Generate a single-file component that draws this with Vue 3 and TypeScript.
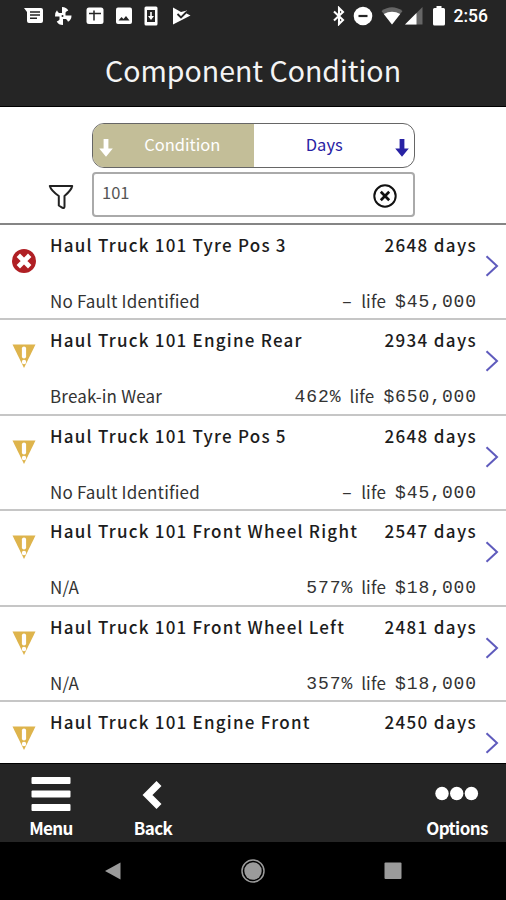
<script setup lang="ts">
import { ref } from 'vue'

interface Component {
  name: string
  days: number
  fault: string
  life: string
  cost: string
  level: 'fault' | 'warn'
}

const filterText = ref('101')

const components: Component[] = [
  { name: 'Haul Truck 101 Tyre Pos 3', days: 2648, fault: 'No Fault Identified', life: '–', cost: '$45,000', level: 'fault' },
  { name: 'Haul Truck 101 Engine Rear', days: 2934, fault: 'Break-in Wear', life: '462%', cost: '$650,000', level: 'warn' },
  { name: 'Haul Truck 101 Tyre Pos 5', days: 2648, fault: 'No Fault Identified', life: '–', cost: '$45,000', level: 'warn' },
  { name: 'Haul Truck 101 Front Wheel Right', days: 2547, fault: 'N/A', life: '577%', cost: '$18,000', level: 'warn' },
  { name: 'Haul Truck 101 Front Wheel Left', days: 2481, fault: 'N/A', life: '357%', cost: '$18,000', level: 'warn' },
  { name: 'Haul Truck 101 Engine Front', days: 2450, fault: '', life: '', cost: '', level: 'warn' },
]
</script>

<template>
  <div class="screen">
    <header class="top">
      <div class="status">
        <div class="notifications">
          <svg width="20" height="18" viewBox="0 0 20 18"><path fill="#fff" fill-rule="evenodd" d="M0 1H17Q19 1 19 3V14Q19 16 17 16H5Q3 16 3 14V5ZM6 4.300V5.700H16V4.300ZM6 7.300V8.700H16V7.300ZM6 10.500V11.900H13V10.500Z" /></svg>
          <svg width="20" height="20" viewBox="0 0 20 20"><g fill="#fff" transform="translate(-2.500 0)"><path d="M9.500 11V1Q14 1 15.800 4.500Q14 5 13 6.500V11Z" /><path d="M9 9.500H19Q19 14 15.500 15.800Q15 14 13.500 13H9Z" /><path d="M10.500 9V19Q6 19 4.200 15.500Q6 15 7 13.500V9Z" /><path d="M11 10.500H2.500Q2.500 6 4.500 4.200Q5 6 6.500 7H11Z" /></g><circle cx="7.500" cy="10" r="1" fill="#252525" /></svg>
          <svg width="18" height="18" viewBox="0 0 18 18"><rect x="-3.500" y="0.500" width="17" height="16.500" rx="2.500" fill="#fff" transform="translate(4 0)" /><path d="M3 6.500H15M8 3.500V13.500" stroke="#252525" stroke-width="1.500" /></svg>
          <svg width="18" height="18" viewBox="0 0 18 18"><rect x="1" y="0.500" width="16" height="16.500" rx="2" fill="#fff" /><path d="M3.500 13.500L6.500 10L8.500 12L11 9L14.500 13.500Z" fill="#252525" /></svg>
          <svg width="14" height="20" viewBox="0 0 14 20"><rect x="0.500" y="0.500" width="13" height="19" rx="1.500" fill="#fff" /><path d="M3 4H11V16H3Z" fill="#252525" /><path d="M6.200 6H7.800V10H10L7 14L4 10H6.200Z" fill="#fff" /></svg>
          <svg class="play" width="20" height="18" viewBox="0 0 20 18"><path d="M1 0.500L9 5L15 3.500L14.500 6.500L18.500 8.500L1 17.500Z" fill="#fff" /><path d="M5.500 7L9 10.500L15 4.500" fill="none" stroke="#252525" stroke-width="1.800" /></svg>
        </div>
        <div class="system">
          <svg class="bt" width="14" height="20" viewBox="0 0 14 20"><path d="M2 5.500L11 14L7 18V2L11 6L2 14.500" fill="none" stroke="#fff" stroke-width="2.100" /></svg>
          <svg class="dnd" width="20" height="20" viewBox="0 0 20 20"><circle cx="10" cy="10" r="9.300" fill="#fff" /><path d="M5.500 10H14.500" stroke="#252525" stroke-width="2.200" /></svg>
          <svg class="wifi" width="22" height="18" viewBox="0 0 22 18"><path d="M0.500 4Q11 -3.500 21.500 4L11 17.500Z" fill="#666" /><path d="M2.800 7Q11 2.500 19.200 7L11 17.500Z" fill="#fff" /></svg>
          <svg class="cell" width="18" height="18" viewBox="0 0 18 18"><path d="M0 17.500L17.500 0V17.500Z" fill="#666" /><path d="M0 17.500L11.500 6V17.500Z" fill="#fff" /></svg>
          <svg class="batt" width="12" height="20" viewBox="0 0 12 20"><path d="M3.500 0H8.500V2H10.500Q12 2 12 3.500V18Q12 19.500 10.500 19.500H1.500Q0 19.500 0 18V3.500Q0 2 1.500 2H3.500Z" fill="#fff" /></svg>
          <span class="clock">2:56</span>
        </div>
      </div>
      <h1>Component Condition</h1>
    </header>

    <section class="controls">
      <svg class="funnel" width="26" height="26" viewBox="0 0 26 26"><path d="M1.800 2H24.200Q23.500 6 16.500 12V22.500Q16.500 24.500 14.500 23.800L10.800 21.500V12Q3 6.500 1.800 2Z" fill="none" stroke="#222" stroke-width="2" stroke-linejoin="round" /></svg>
      <div class="fields">
        <div class="sort">
          <button class="seg active" type="button">
            <svg class="arrow" width="14" height="18" viewBox="0 0 14 18"><path d="M4.600 0H9.400V9.500H13.800L7 17.800L0.200 9.500H4.600Z" fill="currentColor" /></svg>
            <span>Condition</span>
          </button>
          <button class="seg" type="button">
            <span>Days</span>
            <svg class="arrow" width="14" height="18" viewBox="0 0 14 18"><path d="M4.600 0H9.400V9.500H13.800L7 17.800L0.200 9.500H4.600Z" fill="currentColor" /></svg>
          </button>
        </div>
        <div class="search">
          <input v-model="filterText" type="text">
          <button class="clear" type="button" @click="filterText = ''">
            <svg width="24" height="24" viewBox="0 0 24 24"><circle cx="12" cy="12" r="10.700" fill="none" stroke="#111" stroke-width="2" /><path d="M7.800 7.800L16.200 16.200M16.200 7.800L7.800 16.200" stroke="#111" stroke-width="2.700" /></svg>
          </button>
        </div>
      </div>
    </section>

    <main class="list">
      <article v-for="(item, i) in components" :key="i" class="row">
        <div class="mark">
          <svg v-if="item.level === 'fault'" width="26" height="26" viewBox="0 0 26 26"><circle cx="13" cy="13" r="12" fill="#b01f24" /><path d="M9 9L17 17M17 9L9 17" stroke="#fff" stroke-width="4.800" stroke-linecap="square" /></svg>
          <svg v-else width="26" height="26" viewBox="0 0 26 26"><path d="M1.500 1.500H24.500L13 25Z" fill="#deb44c" /><path d="M13 5.500V13.500" stroke="#fff" stroke-width="4.200" stroke-linecap="round" /><circle cx="13" cy="19" r="2.200" fill="#fff" /></svg>
        </div>
        <div class="info">
          <div class="line head">
            <span>{{ item.name }}</span>
            <span class="days">{{ item.days }} days</span>
          </div>
          <div v-if="item.fault" class="line detail">
            <span>{{ item.fault }}</span>
            <span class="value"><span class="mono">{{ item.life }}</span><span class="life">life</span><span class="mono">{{ item.cost }}</span></span>
          </div>
        </div>
        <svg class="chevron" width="14" height="22" viewBox="0 0 14 22"><path d="M1.500 1.200L12 11L1.500 20.800" fill="none" stroke="#5f5bbd" stroke-width="2" /></svg>
      </article>
    </main>

    <nav class="toolbar">
      <button class="tool menu" type="button">
        <svg width="40" height="36" viewBox="0 0 40 36"><g fill="#fff"><rect x="0.500" width="39" height="7" rx="1" /><rect x="0.500" y="13.500" width="39" height="7" rx="1" /><rect x="0.500" y="27" width="39" height="7" rx="1" /></g></svg>
        <span>Menu</span>
      </button>
      <button class="tool back" type="button">
        <svg width="40" height="36" viewBox="0 0 40 36"><path d="M26 6.500L14.500 18L26 29.500" fill="none" stroke="#fff" stroke-width="7" /></svg>
        <span>Back</span>
      </button>
      <button class="tool options" type="button">
        <svg width="44" height="36" viewBox="0 0 44 36"><g fill="#fff"><circle cx="7" cy="16.500" r="6.700" /><circle cx="21.700" cy="16.500" r="6.700" /><circle cx="36.400" cy="16.500" r="6.700" /></g></svg>
        <span>Options</span>
      </button>
    </nav>

    <footer class="system-nav">
      <svg width="18" height="20" viewBox="0 0 18 20"><path d="M1 10L16.500 1.500V18.500Z" fill="#9b9b9b" /></svg>
      <svg width="24" height="24" viewBox="0 0 24 24"><circle cx="12" cy="12" r="11" fill="none" stroke="#9b9b9b" stroke-width="1.500" /><circle cx="12" cy="12" r="8.700" fill="#9b9b9b" /></svg>
      <svg width="18" height="18" viewBox="0 0 18 18"><rect x="0.500" y="0.500" width="17" height="16.500" rx="1" fill="#9b9b9b" /></svg>
    </footer>
  </div>
</template>

<style>
body {
  margin: 0;
}
</style>

<style scoped>
.screen {
  width: 506px;
  height: 900px;
  display: flex;
  flex-direction: column;
  overflow: hidden;
  background: #fff;
  color: #1c1c1c;
  font-family: "Noto Sans CJK SC", "Open Sans", sans-serif;
  font-size: 17px;
}

.screen * {
  box-sizing: border-box;
}

svg {
  display: block;
  flex: none;
}

button,
input {
  margin: 0;
  padding: 0;
  border: 0;
  background: none;
  color: inherit;
  font: inherit;
}

.top {
  flex: none;
  height: 107px;
  background: #252525;
  border-bottom: 1px solid #000;
  color: #f4f4f4;
}

.status {
  height: 32px;
  padding: 0 18px 0 24px;
  display: flex;
  align-items: center;
  justify-content: space-between;
}

.notifications {
  display: flex;
  align-items: center;
  gap: 11px;
}

.system {
  display: flex;
  align-items: center;
}

.play { margin-left: 3px; }
.bt { margin-right: -1px; }
.dnd { margin-left: 8px; }
.wifi { margin-left: 8px; }
.cell { margin-left: 2px; }
.batt { margin-left: 10px; }

.clock {
  margin-left: 9px;
  font: 500 17.500px/20px Roboto, sans-serif;
  color: #fff;
}

h1 {
  margin: 0;
  padding-top: 18px;
  font-size: 28.500px;
  font-weight: 400;
  line-height: 40px;
  text-align: center;
}

.controls {
  flex: none;
  height: 118px;
  padding: 0 0 6px 48px;
  display: flex;
  align-items: flex-end;
  border-bottom: 2px solid #858585;
}

.funnel {
  margin-bottom: 7px;
}

.fields {
  margin-left: 18px;
  width: 323px;
  display: flex;
  flex-direction: column;
  gap: 4px;
}

.sort {
  height: 45px;
  display: flex;
  overflow: hidden;
  border: 1px solid #666;
  border-radius: 12px;
}

.seg {
  flex: 1;
  display: flex;
  align-items: center;
  color: #2822a4;
  font-size: 16.500px;
}

.seg span {
  flex: 1;
  padding-bottom: 3px;
  text-align: center;
}

.seg .arrow {
  margin: 4px 5px 0 0;
}

.seg.active {
  background: #c3be98;
  color: #fff;
}

.seg.active .arrow {
  margin: 4px 0 0 6px;
}

.seg.active span {
  padding-right: 2px;
}

.search {
  height: 45px;
  display: flex;
  align-items: center;
  border: 2px solid #aaa;
  border-radius: 4px;
}

.search input {
  flex: 1;
  min-width: 0;
  height: 36px;
  padding: 0 0 5px 8px;
  outline: 0;
  color: #555;
  font-size: 16.500px;
}

.clear {
  margin: 3px 16px 0 0;
}

.list {
  flex: 1;
  min-height: 0;
  overflow: hidden;
}

.row {
  height: 95.400px;
  display: flex;
  align-items: flex-start;
  border-bottom: 2px solid #c6c6c6;
}

.mark {
  width: 50px;
  padding: 23px 0 0 11px;
}

.info {
  width: 427px;
}

.line {
  display: flex;
  justify-content: space-between;
  line-height: 26px;
  white-space: nowrap;
}

.head {
  padding-top: 7px;
  font-weight: 500;
  letter-spacing: 1.230px;
}

.days {
  letter-spacing: 1.330px;
}

.detail {
  padding-top: 30px;
  color: #333;
  letter-spacing: 0.170px;
}

.value {
  display: flex;
}

.life {
  margin: 0 9px 0 8px;
}

.mono {
  padding-top: 1px;
  font-family: "Liberation Mono", monospace;
  font-size: 18px;
  letter-spacing: 0.900px;
}

.chevron {
  margin: 30px 0 0 8px;
}

.toolbar {
  flex: none;
  height: 79px;
  padding: 13px 18px 0 25px;
  display: flex;
  background: #252525;
  border-top: 1px solid #000;
  color: #fff;
}

.tool {
  width: 52px;
  display: flex;
  flex-direction: column;
  align-items: center;
  font-size: 17px;
  font-weight: 700;
  line-height: 26px;
  letter-spacing: -0.600px;
}

.tool span {
  margin-top: 2px;
}

.back {
  margin-left: 50px;
}

.options {
  width: 62px;
  margin-left: auto;
}

.system-nav {
  flex: none;
  height: 58px;
  padding: 0 104px;
  display: flex;
  align-items: center;
  justify-content: space-between;
  background: #000;
}
</style>
